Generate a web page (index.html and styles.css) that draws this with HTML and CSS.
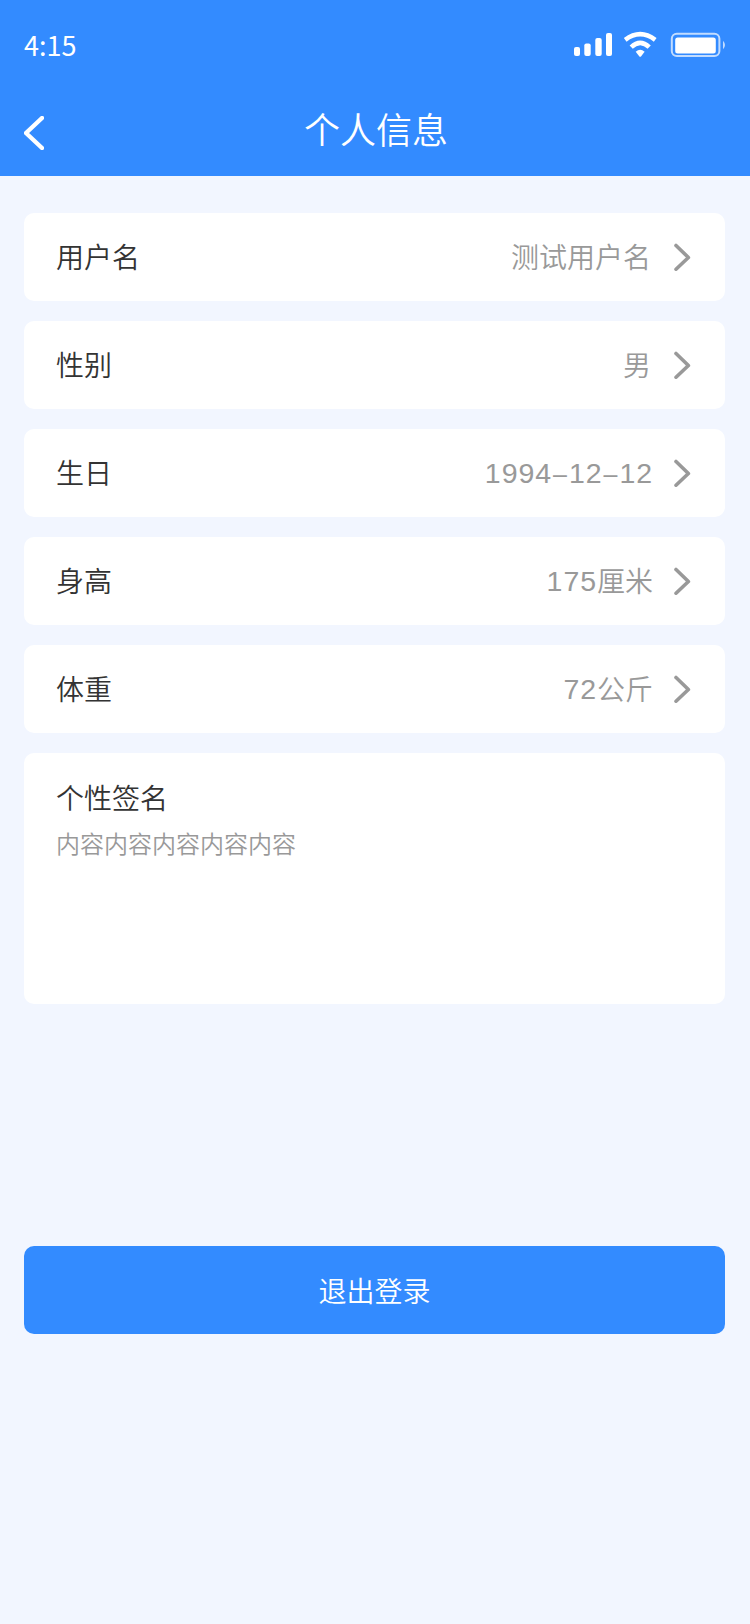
FILE: index.html
```html
<!DOCTYPE html>
<html lang="zh-CN">
<head>
<meta charset="utf-8">
<title>个人信息</title>
<link rel="stylesheet" href="styles.css">
</head>
<body>
<header class="header">
  <div class="status">
    <span class="time">4:15</span>
    <svg class="indicators" width="152" height="26" viewBox="0 0 152 26" fill="none">
      <g fill="#fff">
        <rect x="0" y="16" width="6" height="9" rx="2"/>
        <rect x="10.3" y="12.5" width="6.4" height="12.5" rx="2"/>
        <rect x="21.3" y="7" width="6.4" height="18" rx="2"/>
        <rect x="32" y="2" width="6" height="23" rx="2"/>
        <path d="M61.7 20.8 Q66.2 16.8 70.6 20.8 L67.2 25.2 Q66.2 26.4 65.2 25.2 Z"/>
      </g>
      <path d="M51.2 8.8 Q66.2 -2.4 81.2 8.8M57.2 16.2 Q66.2 7.6 75.2 16.2" stroke="#fff" stroke-width="4.6"/>
      <rect x="97.8" y="2.8" width="47.6" height="22.2" rx="5" stroke="#fff" stroke-opacity=".7" stroke-width="2"/>
      <rect x="101.2" y="6.4" width="40.6" height="16.2" rx="2.5" fill="#fff"/>
      <path d="M149 9.7 Q153 14 149 18.3 Z" fill="#fff" fill-opacity=".7"/>
    </svg>
  </div>
  <nav class="nav">
    <svg class="back" width="20" height="34" viewBox="0 0 20 34"><path d="M18 2 L2 17 L18 32"/></svg>
    <h1 class="title">个人信息</h1>
  </nav>
</header>
<main class="content">
  <section class="card row"><span class="label">用户名</span><span class="value name">测试用户名</span><svg class="chevron" width="17" height="28" viewBox="0 0 17 28"><path d="M2 2.5 L14.4 14.5 L2 26.2"/></svg></section>
  <section class="card row"><span class="label">性别</span><span class="value name">男</span><svg class="chevron" width="17" height="28" viewBox="0 0 17 28"><path d="M2 2.5 L14.4 14.5 L2 26.2"/></svg></section>
  <section class="card row"><span class="label">生日</span><span class="value"><span class="num">1994<span class="dash">–</span>12<span class="dash">–</span>12</span></span><svg class="chevron" width="17" height="28" viewBox="0 0 17 28"><path d="M2 2.5 L14.4 14.5 L2 26.2"/></svg></section>
  <section class="card row"><span class="label">身高</span><span class="value"><span class="num">175</span>厘米</span><svg class="chevron" width="17" height="28" viewBox="0 0 17 28"><path d="M2 2.5 L14.4 14.5 L2 26.2"/></svg></section>
  <section class="card row"><span class="label">体重</span><span class="value"><span class="num">72</span>公斤</span><svg class="chevron" width="17" height="28" viewBox="0 0 17 28"><path d="M2 2.5 L14.4 14.5 L2 26.2"/></svg></section>
  <section class="card signature">
    <h2 class="label">个性签名</h2>
    <p class="bio">内容内容内容内容内容</p>
  </section>
  <button class="logout">退出登录</button>
</main>
</body>
</html>
```
FILE: styles.css
```css
* { box-sizing: border-box; }
body {
  margin: 0;
  min-height: 1624px;
  background: #f2f6ff;
  color: #333;
  font-family: "Noto Sans CJK SC", sans-serif;
  font-weight: 350;
}
.header { height: 176px; background: #338bff; color: #fff; }
.status {
  display: flex;
  justify-content: space-between;
  align-items: center;
  height: 88px;
  padding: 0 24px;
}
.time { padding-top: 2px; font-size: 27px; font-weight: 400; line-height: 40px; }
.indicators { overflow: visible; }
.nav {
  display: grid;
  grid-template-columns: 20px 1fr 20px;
  align-items: center;
  height: 88px;
  padding: 0 24px;
}
.back { margin-top: 2px; fill: none; stroke: #fff; stroke-width: 4.4; stroke-linecap: round; stroke-linejoin: round; }
.title { margin: 0; padding: 0 0 8px 2px; font-size: 36px; font-weight: 350; line-height: 50px; text-align: center; }
.content {
  display: flex;
  flex-direction: column;
  gap: 20px;
  padding: 37px 25px 0 24px;
}
.card { border-radius: 10px; background: #fff; padding: 0 34px 0 32px; }
.row { display: flex; align-items: center; height: 88px; }
.label { margin: 0; padding-bottom: 2px; font-size: 28px; font-weight: 350; line-height: 40px; }
.value { margin-left: auto; margin-right: 21px; padding-bottom: 2px; color: #999; font-size: 28px; line-height: 40px; }
.name { margin-right: 23px; }
.num { font-family: "Liberation Sans", sans-serif; font-size: 28.5px; line-height: 1; letter-spacing: .95px; vertical-align: 1px; }
.dash { padding: 0 1px; font-size: 25px; line-height: 1; }
.chevron { fill: none; stroke: #999; stroke-width: 3.6; stroke-linecap: round; stroke-linejoin: round; }
.signature { height: 251px; padding-top: 24px; }
.bio { margin: 7px 0 0; color: #999; font-size: 24px; line-height: 34px; }
.logout {
  height: 88px;
  margin-top: 222px;
  padding: 0;
  border: 0;
  border-radius: 10px;
  background: #338bff;
  color: #fff;
  font: 350 28px/40px "Noto Sans CJK SC", sans-serif;
}
```
